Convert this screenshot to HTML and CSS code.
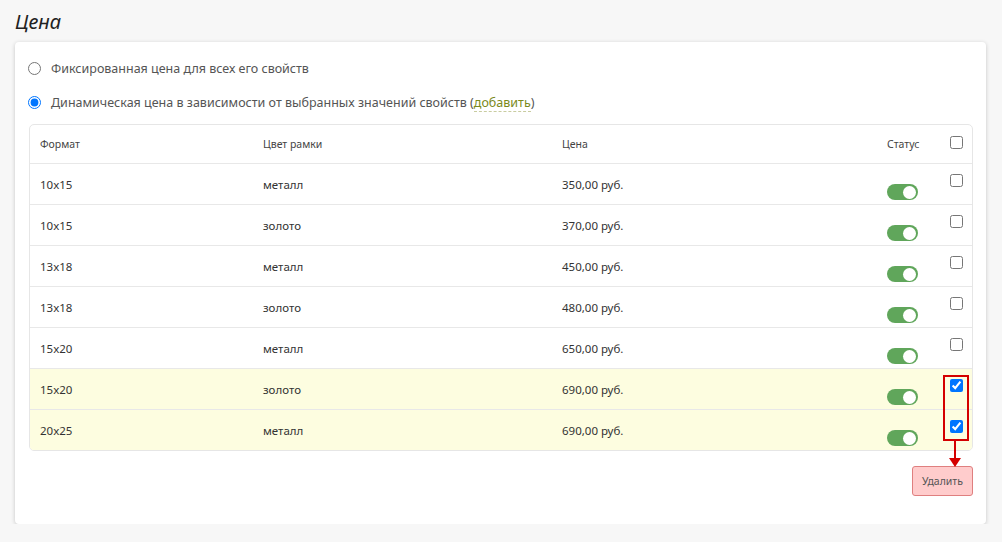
FILE: index.html
```html
<!DOCTYPE html>
<html lang="ru">
<head>
<meta charset="utf-8">
<title>Цена</title>
<link rel="stylesheet" href="styles.css">
</head>
<body>
<h1 class="title">Цена</h1>
<div class="card">
  <label class="radio-row"><input type="radio" name="price"> <span>Фиксированная цена для всех его свойств</span></label>
  <label class="radio-row"><input type="radio" name="price" checked> <span>Динамическая цена в зависимости от выбранных значений свойств <span class="paren">(</span><a class="add" href="#">добавить</a><span class="paren">)</span></span></label>
  <div class="table-wrap">
    <div class="row head">
      <div class="cell">Формат</div><div class="cell">Цвет рамки</div><div class="cell">Цена</div><div class="cell">Статус</div><div class="cell chk"><input type="checkbox"></div>
    </div>
    <div class="row"><div class="cell">10x15</div><div class="cell">металл</div><div class="cell">350,00 руб.</div><div class="cell st"><span class="toggle"></span></div><div class="cell chk"><input type="checkbox"></div></div>
    <div class="row"><div class="cell">10x15</div><div class="cell">золото</div><div class="cell">370,00 руб.</div><div class="cell st"><span class="toggle"></span></div><div class="cell chk"><input type="checkbox"></div></div>
    <div class="row"><div class="cell">13x18</div><div class="cell">металл</div><div class="cell">450,00 руб.</div><div class="cell st"><span class="toggle"></span></div><div class="cell chk"><input type="checkbox"></div></div>
    <div class="row"><div class="cell">13x18</div><div class="cell">золото</div><div class="cell">480,00 руб.</div><div class="cell st"><span class="toggle"></span></div><div class="cell chk"><input type="checkbox"></div></div>
    <div class="row"><div class="cell">15x20</div><div class="cell">металл</div><div class="cell">650,00 руб.</div><div class="cell st"><span class="toggle"></span></div><div class="cell chk"><input type="checkbox"></div></div>
    <div class="row sel"><div class="cell">15x20</div><div class="cell">золото</div><div class="cell">690,00 руб.</div><div class="cell st"><span class="toggle"></span></div><div class="cell chk"><input type="checkbox" checked></div></div>
    <div class="row sel last"><div class="cell">20x25</div><div class="cell">металл</div><div class="cell">690,00 руб.</div><div class="cell st"><span class="toggle"></span></div><div class="cell chk"><input type="checkbox" checked></div></div>
  </div>
  <div class="actions"><button class="btn-del" type="button">Удалить</button></div>
  <div class="mark"></div>
  <svg class="arrow" width="14" height="28" viewBox="0 0 14 28"><line x1="7" y1="0" x2="7" y2="19" stroke="#d40000" stroke-width="2"/><polygon points="1,17 13,17 7,26" fill="#d40000"/></svg>
</div>
</body>
</html>
```
FILE: styles.css
```css
html, body {
  margin: 0;
  padding: 0;
  background: #f7f7f7;
}
body {
  padding: 0 16px 0 15px;
  font-family: "Noto Sans", "Open Sans", sans-serif;
  color: #333;
}
.title {
  margin: 0;
  padding: 8px 0 0 0;
  height: 35px;
  box-sizing: border-box;
  font-size: 20px;
  font-style: italic;
  font-weight: normal;
  color: #222;
  line-height: 28px;
}
.card {
  position: relative;
  background: #fff;
  border-radius: 4px;
  box-shadow: 0 1px 4px rgba(0,0,0,0.2);
  padding: 14px 13px 28px 13px;
  margin-top: 7px;
  height: 482px;
  box-sizing: border-box;
}
.radio-row {
  display: flex;
  align-items: center;
  height: 24px;
  margin-bottom: 10px;
  font-size: 12.5px;
  color: #555;
}
.radio-row input {
  margin: 0 10px 0 0;
  width: 13px;
  height: 13px;
}
.paren { color: #555; }
.add {
  color: #7b8a1c;
  text-decoration: none;
  border-bottom: 1px dashed #c9cca0;
}
.table-wrap {
  margin: 3px 0 0 1px;
  border: 1px solid #e6e6e6;
  border-radius: 5px;
  overflow: hidden;
}
.row {
  display: grid;
  grid-template-columns: 223px 299px 325px 63px 1fr;
  height: 40px;
  border-bottom: 1px solid #e8e8e8;
  font-size: 11.5px;
  color: #333;
}
.row.head {
  height: 38px;
  font-size: 10.5px;
  color: #444;
}
.row.sel { background: #fdfde0; }
.row.last { border-bottom: none; }
.cell {
  padding: 0 10px;
  display: flex;
  align-items: center;
}
.cell.st {
  align-items: flex-end;
  padding-bottom: 4px;
}
.cell.chk {
  align-items: flex-start;
  padding: 10px 0 0 10px;
}
.row.head .cell.chk {
  padding-top: 11px;
}
.chk input {
  margin: 0;
  width: 13px;
  height: 13px;
  display: block;
}
.toggle {
  display: block;
  position: relative;
  width: 31px;
  height: 16px;
  border-radius: 8px;
  background: #60a65b;
}
.toggle::after {
  content: "";
  position: absolute;
  right: 2px;
  top: 1.5px;
  width: 13px;
  height: 13px;
  border-radius: 50%;
  background: #fff;
}
.actions {
  display: flex;
  justify-content: flex-end;
  margin-top: 15px;
}
.btn-del {
  width: 61px;
  height: 30px;
  background: #ffcccc;
  border: 1px solid #df7f7f;
  border-radius: 3px;
  font-family: "Noto Sans", "Open Sans", sans-serif;
  font-size: 10.5px;
  color: #555;
  padding: 0;
}
.mark {
  position: absolute;
  left: 928px;
  top: 333px;
  width: 22px;
  height: 62px;
  border: 2px solid #d40000;
}
.arrow {
  position: absolute;
  left: 933px;
  top: 399px;
}
```
